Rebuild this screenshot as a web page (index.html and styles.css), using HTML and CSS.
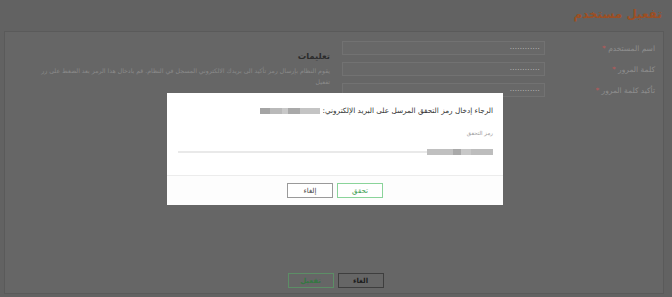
FILE: index.html
```html
<!DOCTYPE html>
<html lang="ar" dir="rtl">
<head>
<meta charset="utf-8">
<link rel="stylesheet" href="styles.css">
</head>
<body>
<div class="page">
  <h1 class="title">تفعيل مستخدم</h1>
  <div class="panel">
    <div class="content">
      <div class="form">
        <div class="row"><label class="lbl">اسم المستخدم <span class="req">*</span></label><div class="inp">............</div></div>
        <div class="row"><label class="lbl">كلمة المرور <span class="req">*</span></label><div class="inp">............</div></div>
        <div class="row"><label class="lbl">تأكيد كلمة المرور <span class="req">*</span></label><div class="inp">............</div></div>
      </div>
      <div class="info">
        <h2 class="info-title">تعليمات</h2>
        <p class="info-text">يقوم النظام بإرسال رمز تأكيد الى بريدك الالكتروني المسجل في النظام. قم بادخال هذا الرمز بعد الضغط على زر تفعيل</p>
      </div>
    </div>
    <div class="actions">
      <button class="btn btn-dark">الغاء</button>
      <button class="btn btn-green-dim">تفعيل</button>
    </div>
  </div>
</div>

<div class="modal">
  <div class="modal-body">
    <p class="modal-msg">الرجاء إدخال رمز التحقق المرسل على البريد الإلكتروني: <span class="blur blur-email"><i class="b1"></i><i class="b2"></i><i class="b3"></i><i class="b4"></i><i class="b5"></i></span></p>
    <div class="field">
      <div class="field-label">رمز التحقق</div>
      <div class="field-value"><span class="blur blur-code"><i class="c1"></i><i class="c2"></i><i class="c3"></i><i class="c4"></i></span></div>
    </div>
  </div>
  <div class="modal-footer">
    <button class="btn btn-green">تحقق</button>
    <button class="btn btn-gray">إلغاء</button>
  </div>
</div>
</body>
</html>
```
FILE: styles.css
```css
* { box-sizing: border-box; }
html, body { margin: 0; padding: 0; }
body {
  background: #626262;
  font-family: "DejaVu Sans", sans-serif;
  width: 672px;
  height: 297px;
  overflow: hidden;
}
.page { padding: 0 8px 0 4px; }
.title {
  margin: 0;
  padding: 3px 2px 0 0;
  height: 31px;
  line-height: 22px;
  font-size: 12px;
  font-weight: bold;
  color: #9c4f24;
}
.panel {
  height: 263px;
  background: #666666;
  border: 1px solid #5a5a5a;
  display: flex;
  flex-direction: column;
  padding: 9px 8px 5px 17px;
}
.content {
  display: flex;
  gap: 12px;
}
.form {
  display: flex;
  flex-direction: column;
  gap: 7px;
}
.row {
  display: flex;
  align-items: center;
  height: 14px;
}
.lbl {
  width: 110px;
  font-size: 7.5px;
  color: #8e8e8e;
}
.req { color: #b85a5a; }
.inp {
  width: 203px;
  height: 14px;
  border: 1px solid #727272;
  background: #686868;
  color: #c4c4c4;
  font-size: 7px;
  line-height: 10px;
  padding: 0 4px;
  letter-spacing: 0.3px;
}
.info { flex: 1; padding-top: 9px; padding-left: 10px; }
.info-title {
  margin: 0 0 3px 0;
  font-size: 8.5px;
  line-height: 12px;
  font-weight: bold;
  color: #2c2c2c;
}
.info-text {
  margin: 0;
  font-size: 6.2px;
  line-height: 11px;
  color: #8a8a8a;
}
.actions {
  margin-top: auto;
  display: flex;
  justify-content: center;
  gap: 4px;
  padding-right: 6px;
}
.btn {
  width: 46px;
  height: 15px;
  padding: 0;
  font-family: "DejaVu Sans", sans-serif;
  font-size: 7px;
  font-weight: bold;
  background: transparent;
  cursor: pointer;
}
.btn-dark { border: 1px solid #3e3e3e; color: #1c1c1c; }
.btn-green-dim { border: 1px solid #5c8e66; color: #347842; }

.modal {
  position: absolute;
  left: 167px;
  top: 93px;
  width: 336px;
  height: 112px;
  background: #ffffff;
  display: flex;
  flex-direction: column;
}
.modal-body {
  height: 83px;
  padding: 12px 10px 0 11px;
  border-bottom: 1px solid #ececec;
}
.modal-msg {
  margin: 0;
  font-size: 7.3px;
  line-height: 12px;
  color: #333;
}
.blur { display: inline-flex; vertical-align: middle; filter: blur(0.7px); }
.blur i { display: block; height: 6px; }
.b1 { width: 20px; background: #c4c4c4; }
.b2 { width: 12px; background: #a9a9a9; }
.b3 { width: 6px; background: #c8c8c8; }
.b4 { width: 12px; background: #b9b9b9; }
.b5 { width: 10px; background: #a4a4a4; }
.field { margin-top: 12px; }
.field-label {
  font-size: 5.5px;
  line-height: 9px;
  color: #9a9a9a;
}
.field-value {
  height: 15px;
  padding-top: 3px;
  border-bottom: 2px solid #e9e9e9;
}
.c1 { width: 22px; background: #bdbdbd; }
.c2 { width: 10px; background: #c8c8c8; }
.c3 { width: 8px; background: #a9a9a9; }
.c4 { width: 26px; background: #c0c0c0; }
.modal-footer {
  flex: 1;
  background: #fdfdfd;
  display: flex;
  justify-content: center;
  align-items: center;
  gap: 4px;
}
.modal-footer .btn { height: 15px; font-weight: normal; }
.btn-green { border: 1px solid #8ad49a; color: #3e9e52; background: #fff; }
.btn-gray { border: 1px solid #9a9a9a; color: #444; background: #fff; }
```
